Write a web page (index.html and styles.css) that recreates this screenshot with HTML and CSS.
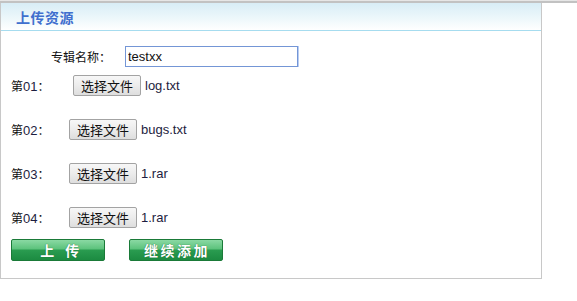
FILE: index.html
```html
<!DOCTYPE html>
<html>
<head>
<meta charset="utf-8">
<link rel="stylesheet" href="styles.css">
</head>
<body>
<div class="topline"></div>
<div class="panel">
  <div class="panel-head"><span class="title">上传资源</span></div>
  <div class="panel-body">
    <div class="row row-name">
      <span class="name-label">专辑名称：</span>
      <input class="name-input" type="text" value="testxx">
    </div>
    <div class="row row-first">
      <span class="num-label">第<span class="digits">01</span>：</span>
      <span class="file-btn">选择文件</span><span class="file-name">log.txt</span>
    </div>
    <div class="row row-file">
      <span class="num-label">第<span class="digits">02</span>：</span>
      <span class="file-btn">选择文件</span><span class="file-name">bugs.txt</span>
    </div>
    <div class="row row-file">
      <span class="num-label">第<span class="digits">03</span>：</span>
      <span class="file-btn">选择文件</span><span class="file-name">1.rar</span>
    </div>
    <div class="row row-file">
      <span class="num-label">第<span class="digits">04</span>：</span>
      <span class="file-btn">选择文件</span><span class="file-name">1.rar</span>
    </div>
    <div class="actions">
      <span class="green-btn green-btn-tight">上　传</span>
      <span class="green-btn">继续添加</span>
    </div>
  </div>
</div>
</body>
</html>
```

FILE: styles.css
```css
* { box-sizing: border-box; }
html, body { margin: 0; padding: 0; background: #fff; }
body {
  font-family: "Liberation Sans", "Noto Sans CJK SC", sans-serif;
  font-size: 12px;
  color: #111;
}
.topline {
  height: 3px;
  border-top: 1px solid #e6e6e6;
  border-bottom: 2px solid #c2c2c2;
}
.panel {
  width: 542px;
  border-left: 1px solid #c8c8c8;
  border-right: 1px solid #c8c8c8;
  border-bottom: 1px solid #c8c8c8;
}
.panel-head {
  height: 28px;
  padding-left: 15px;
  background: linear-gradient(to bottom, #d8edf6 0%, #eef8fb 60%, #ffffff 100%);
  border-bottom: 1px solid #a6dcef;
  display: flex;
  align-items: center;
}
.title {
  font-family: "Noto Sans CJK SC", sans-serif;
  font-size: 14px;
  font-weight: bold;
  color: #3f6fce;
  letter-spacing: 0.5px;
  margin-top: 1px;
}
.panel-body {
  padding: 15px 0 17px 0;
  display: flex;
  flex-direction: column;
}
.row {
  display: flex;
  align-items: center;
  height: 21px;
}
.row-first { margin-top: 8px; }
.row-file { margin-top: 23px; }
.name-label {
  margin-left: 50px;
  width: 74px;
  font-family: "Noto Sans CJK SC", sans-serif;
  font-size: 12px;
}
.name-input {
  width: 173px;
  height: 21px;
  border: 1px solid #7496d6;
  box-shadow: 1px 0 0 #b8cdf3;
  padding: 0 2px;
  font-family: "Liberation Sans", sans-serif;
  font-size: 13px;
  color: #111;
  outline: none;
}
.num-label {
  margin-left: 10px;
  font-family: "Noto Sans CJK SC", sans-serif;
  font-size: 12px;
  width: 58px;
}
.row-first .num-label { width: 62px; }
.digits {
  font-family: "Liberation Sans", sans-serif;
  font-size: 13px;
  color: #1d1d40;
}
.file-btn {
  display: inline-flex;
  align-items: center;
  justify-content: center;
  width: 68px;
  height: 21px;
  border: 1px solid #a3a3a3;
  border-radius: 2px;
  background: linear-gradient(to bottom, #f7f7f7 0%, #ececec 50%, #dedede 100%);
  font-family: "Noto Sans CJK SC", sans-serif;
  font-size: 13px;
  color: #111;
}
.file-name {
  margin-left: 4px;
  font-family: "Liberation Sans", sans-serif;
  font-size: 13px;
  color: #1d1d40;
}
.actions {
  display: flex;
  margin-top: 11px;
  margin-left: 10px;
  gap: 24px;
}
.green-btn {
  display: flex;
  align-items: center;
  justify-content: center;
  width: 94px;
  height: 22px;
  padding-left: 2px;
  border: 1px solid #1a7a38;
  border-radius: 2px;
  background: linear-gradient(to bottom, #8ad9a3 0%, #5cc27c 45%, #2a9c50 50%, #1c8b41 100%);
  color: #fff;
  font-family: "Noto Sans CJK SC", sans-serif;
  font-weight: bold;
  font-size: 14px;
  letter-spacing: 2.5px;
  text-shadow: 0 0 1px #0d5a25;
}
.green-btn-tight {
  letter-spacing: -1.5px;
}
```
